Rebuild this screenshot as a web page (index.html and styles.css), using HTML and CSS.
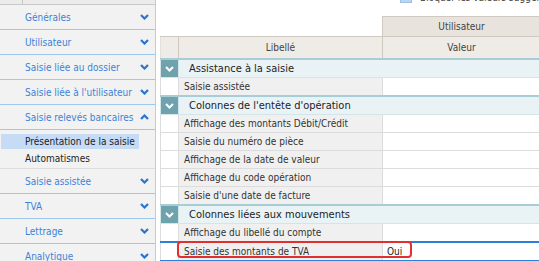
FILE: index.html
```html
<!DOCTYPE html>
<html lang="fr">
<head>
    <meta charset="UTF-8">
    <title>Paramètres de saisie</title>
    <link rel="stylesheet" href="styles.css">
</head>
<body>
    <aside class="sidebar">
        <div class="side-top"><span class="side-top-cell"></span></div>
        <div class="side-item"><span>Générales</span><svg class="chev" viewBox="0 0 9 6"><polyline points="1,1 4.5,4.5 8,1"/></svg></div>
        <div class="side-item"><span>Utilisateur</span><svg class="chev" viewBox="0 0 9 6"><polyline points="1,1 4.5,4.5 8,1"/></svg></div>
        <div class="side-item"><span>Saisie liée au dossier</span><svg class="chev" viewBox="0 0 9 6"><polyline points="1,1 4.5,4.5 8,1"/></svg></div>
        <div class="side-item"><span>Saisie liée à l'utilisateur</span><svg class="chev" viewBox="0 0 9 6"><polyline points="1,1 4.5,4.5 8,1"/></svg></div>
        <div class="side-item"><span>Saisie relevés bancaires</span><svg class="chev" viewBox="0 0 9 6"><polyline points="1,5 4.5,1.5 8,5"/></svg></div>
        <ul class="side-sub">
            <li class="active">Présentation de la saisie</li>
            <li>Automatismes</li>
        </ul>
        <div class="side-item"><span>Saisie assistée</span><svg class="chev" viewBox="0 0 9 6"><polyline points="1,1 4.5,4.5 8,1"/></svg></div>
        <div class="side-item"><span>TVA</span><svg class="chev" viewBox="0 0 9 6"><polyline points="1,1 4.5,4.5 8,1"/></svg></div>
        <div class="side-item"><span>Lettrage</span><svg class="chev" viewBox="0 0 9 6"><polyline points="1,1 4.5,4.5 8,1"/></svg></div>
        <div class="side-item"><span>Analytique</span><svg class="chev" viewBox="0 0 9 6"><polyline points="1,1 4.5,4.5 8,1"/></svg></div>
    </aside>
    <main class="content">
        <div class="toolbar">
            <div class="toolbar-row"><span class="check"></span><span>Bloquer les valeurs suggérées</span></div>
        </div>
        <table class="grid">
            <colgroup><col class="c-tog"><col class="c-label"><col class="c-value"></colgroup>
            <thead>
                <tr class="head-top"><td class="blank" colspan="2"></td><th class="head-user">Utilisateur</th></tr>
                <tr class="head-cols"><th></th><th>Libellé</th><th>Valeur</th></tr>
            </thead>
            <tbody>
                <tr class="group"><td class="tog"><svg viewBox="0 0 9 6"><polyline points="1,1 4.5,4.5 8,1"/></svg></td><td colspan="2">Assistance à la saisie</td></tr>
                <tr><td></td><td class="label">Saisie assistée</td><td class="value"></td></tr>
                <tr class="group"><td class="tog"><svg viewBox="0 0 9 6"><polyline points="1,1 4.5,4.5 8,1"/></svg></td><td colspan="2">Colonnes de l'entête d'opération</td></tr>
                <tr><td></td><td class="label">Affichage des montants Débit/Crédit</td><td class="value"></td></tr>
                <tr><td></td><td class="label">Saisie du numéro de pièce</td><td class="value"></td></tr>
                <tr><td></td><td class="label">Affichage de la date de valeur</td><td class="value"></td></tr>
                <tr><td></td><td class="label">Affichage du code opération</td><td class="value"></td></tr>
                <tr><td></td><td class="label">Saisie d'une date de facture</td><td class="value"></td></tr>
                <tr class="group"><td class="tog"><svg viewBox="0 0 9 6"><polyline points="1,1 4.5,4.5 8,1"/></svg></td><td colspan="2">Colonnes liées aux mouvements</td></tr>
                <tr><td></td><td class="label">Affichage du libellé du compte</td><td class="value"></td></tr>
                <tr class="selected"><td></td><td class="label">Saisie des montants de TVA<span class="mark"></span></td><td class="value">Oui</td></tr>
            </tbody>
        </table>
    </main>
</body>
</html>
```
FILE: styles.css
```css
body {
    margin: 0;
    padding: 0;
    display: flex;
    height: 261px;
    overflow: hidden;
    background-color: #fff;
    font-family: "DejaVu Sans Condensed", "Liberation Sans", sans-serif;
    font-size: 10px;
    color: #333;
}

/* left menu */
.sidebar {
    width: 155px;
    flex-shrink: 0;
    background-color: #f2f2f2;
    border-right: 1px solid #cbcbcb;
}

.side-top {
    height: 4px;
    background-color: #ebebeb;
    border-bottom: 1px solid #c9c9c9;
}

.side-top-cell {
    display: block;
    width: 22px;
    height: 4px;
    border-right: 1px solid #c9c9c9;
}

.side-item {
    display: flex;
    align-items: center;
    justify-content: space-between;
    height: 24px;
    padding: 0 6px 0 25px;
    border-bottom: 1px solid #9fc7ec;
    color: #3d82d6;
}

.chev {
    width: 9px;
    height: 6px;
    fill: none;
    stroke: #2a75cf;
    stroke-width: 2.2;
}

.side-sub {
    list-style: none;
    margin: 0;
    padding: 4px 0 0;
    border-bottom: 1px solid #dedede;
}

.side-sub li {
    width: 114px;
    height: 15px;
    line-height: 15px;
    margin: 0 0 2px 1px;
    padding-left: 24px;
    color: #222;
}

.side-sub li.active {
    background-color: #c6dcf6;
}

/* main area */
.content {
    flex: 1;
    padding-left: 4px;
}

.toolbar {
    display: flow-root;
    height: 16px;
}

.toolbar-row {
    display: flex;
    align-items: center;
    gap: 8px;
    margin-top: -9px;
    padding-left: 240px;
    height: 12px;
    white-space: nowrap;
    color: #444;
}

.check {
    width: 10px;
    height: 10px;
    background-color: #bcd5f2;
    border: 1px solid #9fbfe6;
}

.grid {
    width: 380px;
    table-layout: fixed;
    border-collapse: collapse;
}

.c-tog { width: 18px; }
.c-label { width: 204px; }
.c-value { width: 158px; }

.grid td,
.grid th {
    padding: 0;
    height: 17px;
    border: 1px solid #dcdcdc;
    white-space: nowrap;
    overflow: hidden;
}

.grid th {
    font-weight: normal;
    color: #444;
    text-align: center;
}

.grid .blank {
    border: none;
    border-bottom: 1px solid #cfc9c1;
}

.head-top th {
    height: 19px;
    background-color: #e8e3dc;
    border-color: #cfc9c1;
}

.head-cols th {
    height: 21px;
    background-color: #efebe6;
    border-color: #cfc9c1;
    border-left-color: #e4dfd8;
}

.group td {
    background-color: #e9f3f6;
    border-color: #d4e5ea;
    border-top: 2px solid #a9cdd6;
    font-size: 11px;
    color: #222;
    padding-left: 10px;
}

.group .tog {
    padding: 0;
    background-color: #6ea2ad;
    text-align: center;
}

.tog svg {
    width: 9px;
    height: 6px;
    fill: none;
    stroke: #fff;
    stroke-width: 2;
    vertical-align: middle;
}

.grid .label {
    background-color: #f0f0f0;
    padding-left: 5px;
}

.grid .value {
    padding-left: 4px;
    color: #222;
}

.selected td {
    border-top: 2px solid #2f7fd8;
    border-bottom: 2px solid #2f7fd8;
}

.selected .label {
    position: relative;
    overflow: visible;
}

.mark {
    position: absolute;
    left: -2px;
    top: -2px;
    width: 231px;
    height: 13px;
    border: 2px solid #e2302f;
    border-radius: 4px;
}
```
